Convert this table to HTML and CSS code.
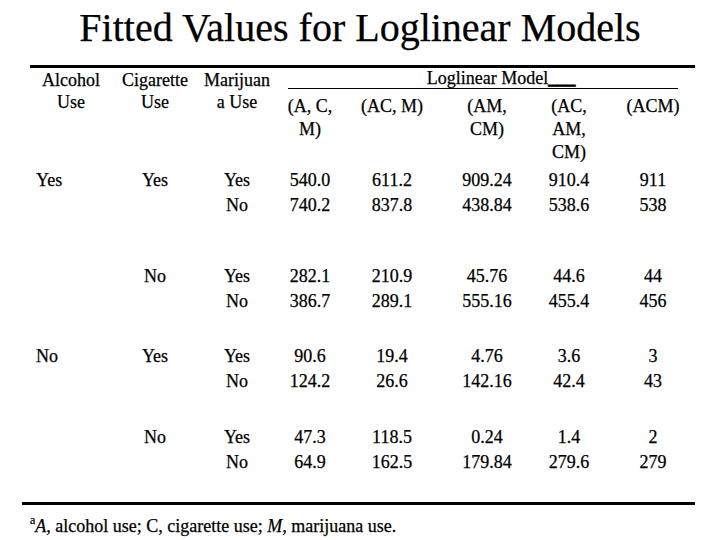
FILE: index.html
```html
<!DOCTYPE html>
<html>
<head>
<meta charset="utf-8">
<link rel="stylesheet" href="styles.css">
</head>
<body>
<div class="page">
  <h1 class="title">Fitted Values for Loglinear Models</h1>
  <div class="table">
    <div class="head">
      <div class="hcell">Alcohol<br>Use</div>
      <div class="hcell">Cigarette<br>Use</div>
      <div class="hcell">Marijuan<br>a Use</div>
      <div class="group">Loglinear Model<span class="blank">___</span></div>
      <div class="model">(A, C,<br>M)</div>
      <div class="model">(AC, M)</div>
      <div class="model">(AM,<br>CM)</div>
      <div class="model">(AC,<br>AM,<br>CM)</div>
      <div class="model">(ACM)</div>
    </div>
    <div class="row r1">
      <div class="first">Yes</div>
      <div>Yes</div>
      <div>Yes<br>No</div>
      <div>540.0<br>740.2</div>
      <div>611.2<br>837.8</div>
      <div>909.24<br>438.84</div>
      <div>910.4<br>538.6</div>
      <div>911<br>538</div>
    </div>
    <div class="row r2">
      <div class="first"></div>
      <div>No</div>
      <div>Yes<br>No</div>
      <div>282.1<br>386.7</div>
      <div>210.9<br>289.1</div>
      <div>45.76<br>555.16</div>
      <div>44.6<br>455.4</div>
      <div>44<br>456</div>
    </div>
    <div class="row r3">
      <div class="first">No</div>
      <div>Yes</div>
      <div>Yes<br>No</div>
      <div>90.6<br>124.2</div>
      <div>19.4<br>26.6</div>
      <div>4.76<br>142.16</div>
      <div>3.6<br>42.4</div>
      <div>3<br>43</div>
    </div>
    <div class="row r4">
      <div class="first"></div>
      <div>No</div>
      <div>Yes<br>No</div>
      <div>47.3<br>64.9</div>
      <div>118.5<br>162.5</div>
      <div>0.24<br>179.84</div>
      <div>1.4<br>279.6</div>
      <div>2<br>279</div>
    </div>
  </div>
  <div class="rule"></div>
  <p class="note"><sup class="mark">a</sup><i>A,</i> alcohol use; C, cigarette use; <i>M,</i> marijuana use.</p>
</div>
</body>
</html>
```

FILE: styles.css
```css
html, body {
  margin: 0;
  padding: 0;
  background: #ffffff;
}

.page {
  width: 720px;
  height: 540px;
  font-family: "Liberation Serif", "Times New Roman", serif;
  color: #000000;
  font-size: 18px;
  -webkit-text-stroke: 0.25px #000;
}

.title {
  margin: 0;
  height: 65px;
  font-size: 40px;
  font-weight: normal;
  line-height: 56px;
  text-align: center;
}

.table {
  margin-left: 30px;
  width: 665px;
  border-top: 3px solid #000;
}

.head,
.row {
  display: grid;
  grid-template-columns: 82px 86px 78px 68px 96px 94px 70px 98px;
}

.hcell {
  grid-row: 1 / span 2;
  text-align: center;
  line-height: 22px;
  padding-top: 1px;
}

.group {
  grid-column: 4 / span 5;
  grid-row: 1;
  line-height: 20px;
  margin-left: 12px;
  margin-right: 24px;
  padding-left: 36px;
  text-align: center;
  border-bottom: 1px solid #000;
}

.blank {
  font-weight: bold;
  -webkit-text-stroke: 0.8px #000;
}

.model {
  grid-row: 2;
  text-align: center;
  line-height: 23px;
  padding-top: 6px;
}

.row > div {
  text-align: center;
  line-height: 25px;
}

.row > .first {
  text-align: left;
  padding-left: 6px;
}

.r1 { margin-top: 4px; }
.r2 { margin-top: 46px; }
.r3 { margin-top: 30px; }
.r4 { margin-top: 31px; }

.rule {
  margin-top: 27px;
  margin-left: 22px;
  width: 673px;
  border-top: 3px solid #000;
}

.note {
  margin: 9px 0 0 30px;
  line-height: 25px;
}

.mark {
  font-size: 12px;
  vertical-align: 8px;
  line-height: 0;
}
```
